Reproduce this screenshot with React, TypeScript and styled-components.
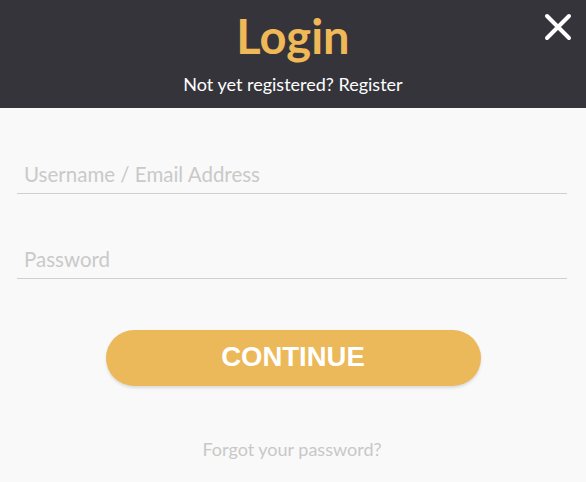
import React from "react";
import styled, { createGlobalStyle } from "styled-components";

const Global = createGlobalStyle`
  html, body { margin: 0; padding: 0; background: #f9f9f9; }
  body { font-family: Lato, "Noto Sans", sans-serif; }
`;

const Modal = styled.div`
  width: 586px;
  height: 482px;
  background: #f9f9f9;
  display: flex;
  flex-direction: column;
`;

const Header = styled.header`
  position: relative;
  height: 108px;
  background: #36343b;
  display: flex;
  flex-direction: column;
  align-items: center;
  box-sizing: border-box;
  padding-top: 10px;
`;

const Title = styled.h1`
  margin: 0;
  font-family: Lato, sans-serif;
  font-weight: 700;
  font-size: 47px;
  line-height: 52px;
  color: #efb957;
`;

const Sub = styled.div`
  margin-top: 11px;
  font-family: Lato, sans-serif;
  font-size: 18px;
  color: #ffffff;
`;

const Close = styled.button`
  position: absolute;
  top: 12px;
  right: 13px;
  width: 30px;
  height: 30px;
  padding: 0;
  border: none;
  background: none;
  display: flex;
  align-items: center;
  justify-content: center;
`;

const Body = styled.div`
  flex: 1;
  display: flex;
  flex-direction: column;
  padding: 50px 19px 0 17px;
`;

const Field = styled.input<{ $mb?: number }>`
  box-sizing: border-box;
  height: 36px;
  border: none;
  border-bottom: 1px solid #cfcfcf;
  background: transparent;
  padding: 0 0 4px 7px;
  font-family: Lato, sans-serif;
  font-size: 20.5px;
  color: #333;
  outline: none;
  margin-bottom: ${(p) => p.$mb ?? 0}px;
  &::placeholder { color: #c9c9c9; }
`;

const Button = styled.button`
  align-self: center;
  margin-top: 51px;
  margin-left: 2px;
  width: 375px;
  height: 56px;
  border: none;
  border-radius: 28px;
  background: #ecb95a;
  box-shadow: 0 2px 3px rgba(0, 0, 0, 0.12);
  color: #fff;
  font-family: "Liberation Sans", Arial, sans-serif;
  font-weight: 700;
  font-size: 27.5px;
  line-height: 1;
  padding: 0 0 2px;
`;

const Forgot = styled.a`
  align-self: center;
  margin-top: 52px;
  font-family: Lato, sans-serif;
  font-size: 18px;
  color: #c8c8c8;
  text-decoration: none;
`;

export default function App() {
  return (
    <>
      <Global />
      <Modal>
        <Header>
          <Title>Login</Title>
          <Sub>Not yet registered? Register</Sub>
          <Close aria-label="close">
            <svg width="28" height="28" viewBox="0 0 28 28">
              <path d="M3 3 L25 25 M25 3 L3 25" stroke="#fff" strokeWidth="4" strokeLinecap="round" />
            </svg>
          </Close>
        </Header>
        <Body>
          <Field placeholder="Username / Email Address" $mb={49} />
          <Field placeholder="Password" type="password" />
          <Button>CONTINUE</Button>
          <Forgot href="#">Forgot your password?</Forgot>
        </Body>
      </Modal>
    </>
  );
}
